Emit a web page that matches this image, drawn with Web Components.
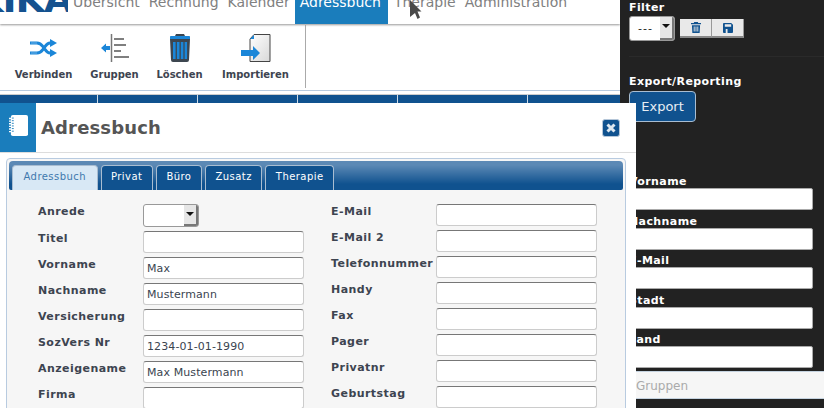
<!DOCTYPE html>
<html lang="de"><head><meta charset="utf-8"><title>Adressbuch</title>
<style>
html,body{margin:0;padding:0;height:408px;overflow:hidden;background:#222}
body{font-family:"DejaVu Sans",sans-serif}
</style></head><body>
<app-shell>
  <top-nav slot="main">
    <span class="logo" slot="logo">KIKA</span>
    <nav-link>Übersicht</nav-link><nav-link>Rechnung</nav-link><nav-link>Kalender</nav-link><nav-link active>Adressbuch</nav-link><nav-link>Therapie</nav-link><nav-link>Administration</nav-link>
  </top-nav>
  <tool-bar slot="main">
    <tool-button style="width:57px" label="Verbinden"><svg width="28" height="28" viewBox="0 0 28 28" fill="none"><g stroke="#1b86d8" stroke-width="3"><path d="M0 9h7c4 0 5 2.500 7 5s3 5 6 5h2M0 19h7c4 0 5-2.500 7-5s3-5 6-5h2"/></g><g stroke="#8cc6f0" stroke-width=".7"><path d="M1 9h6M1 19h6"/></g><path fill="#1b86d8" d="M20 5l7 4-7 4zM20 15l7 4-7 4z"/></svg></tool-button>
    <tool-button style="width:47px" label="Gruppen"><svg width="28" height="28" viewBox="0 0 28 28" fill="none"><path d="M10.500 0v28" stroke="#777" stroke-width="1.500"/><path d="M13 5h10M13 11h12M13 17h7M13 23h15" stroke="#555" stroke-width="1.500"/><path fill="#1b86d8" d="M0 14l5-4.500v2.500h4v4H5v2.500z"/></svg></tool-button>
    <tool-button style="width:45px" label="Löschen"><svg width="20" height="28" viewBox="0 0 20 28"><path fill="#3b4550" d="M6 0h8l1 2h3q2 0 2 2v1H0V4q0-2 2-2h3z"/><path fill="#1b86d8" d="M0 2.500q0-.5 2-.5h16q2 0 2 .5V5H0z"/><path fill="#3d4650" d="M0 5h20l-1 21q0 2-2 2H3q-2 0-2-2z"/><path fill="#1b86d8" d="M3 8h2.600v17H3zM6.900 8h2.600v17H6.900zM10.800 8h2.600v17h-2.600zM14.600 8h2.500v17h-2.500z"/></svg></tool-button>
    <tool-button style="width:69px" label="Importieren"><svg width="30" height="28" viewBox="0 0 30 28"><defs><linearGradient id="pg" x1="0" y1="0" x2="1" y2="1"><stop offset="0" stop-color="#fff"/><stop offset="1" stop-color="#d8d8d8"/></linearGradient></defs><path fill="url(#pg)" stroke="#444" stroke-width="1" d="M13 .5h16v27H9V5z"/><path fill="#1b86d8" d="M9 5l4-4v4z"/><path fill="#1b86d8" d="M0 16h12v-4l7 7-7 7v-4H0z"/></svg></tool-button>
  </tool-bar>
  <grid-head slot="main"></grid-head>
  <side-panel slot="side">
    <side-label>Filter</side-label>
    <filter-row><drop-select value="---" wide></drop-select><icon-button><svg width="10" height="11" viewBox="0 0 11 12" fill="#10528f"><path d="M3.500 0h4l.5 1h3v1.500H0V1h3zM1 3.500h9L9.500 12h-8zM3 5v5.500h1V5zm2 0v5.500h1V5zm2 0v5.500h1V5z" fill-rule="evenodd"/></svg></icon-button><icon-button><svg width="10" height="10" viewBox="0 0 11 11" fill="#10528f"><path fill-rule="evenodd" d="M1 0h8l2 2v8a1 1 0 0 1-1 1H1a1 1 0 0 1-1-1V1a1 1 0 0 1 1-1zm1 1.500V4h7V1.500zM3 6.500V11h2V6.500z"/></svg></icon-button></filter-row>
    <side-rule></side-rule>
    <side-label>Export/Reporting</side-label>
    <export-button>Export</export-button>
    <side-input label="Vorname" first></side-input>
    <side-input label="Nachname"></side-input>
    <side-input label="E-Mail"></side-input>
    <side-input label="Stadt"></side-input>
    <side-input label="Land"></side-input>
    <side-section>Gruppen</side-section>
  </side-panel>
  <dialog-window slot="overlay" heading="Adressbuch">
    <tab-panel>
      <form-grid>
        <div slot="left">
          <form-row label="Anrede" kind="select"></form-row>
          <form-row label="Titel"></form-row>
          <form-row label="Vorname">Max</form-row>
          <form-row label="Nachname">Mustermann</form-row>
          <form-row label="Versicherung"></form-row>
          <form-row label="SozVers Nr">1234-01-01-1990</form-row>
          <form-row label="Anzeigename">Max Mustermann</form-row>
          <form-row label="Firma"></form-row>
        </div>
        <div slot="right">
          <form-row label="E-Mail"></form-row>
          <form-row label="E-Mail 2"></form-row>
          <form-row label="Telefonnummer"></form-row>
          <form-row label="Handy"></form-row>
          <form-row label="Fax"></form-row>
          <form-row label="Pager"></form-row>
          <form-row label="Privatnr"></form-row>
          <form-row label="Geburtstag"></form-row>
        </div>
      </form-grid>
    </tab-panel>
  </dialog-window>
  <svg slot="overlay" class="cursor" width="13" height="20" viewBox="0 0 13 20" style="position:absolute;left:410px;top:0;z-index:5"><path fill="#4a4a4a" d="M0 0l11.500 11.500H7.500l2.500 6-2.500 1.500-2.500-6-5 4z"/></svg>
</app-shell>
<script>
const def=(name,html,init)=>customElements.define(name,class extends HTMLElement{
  constructor(){super();this.attachShadow({mode:"open"}).innerHTML=html;}
  connectedCallback(){if(init)init(this,this.shadowRoot);}
});
def("app-shell",`<style>:host{display:grid;grid-template-columns:620px 204px;width:824px;height:408px;overflow:hidden;position:relative;background:#222}
.m{background:#fff;height:408px;overflow:hidden}.s{height:408px;overflow:hidden}</style>
<div class="m"><slot name="main"></slot></div><div class="s"><slot name="side"></slot></div><slot name="overlay"></slot>`);
def("top-nav",`<style>:host{display:flex;align-items:flex-end;height:24px;overflow:hidden;background:#fff;box-shadow:0 1px 2px #999;position:relative;z-index:1}
.l{width:68px;height:24px;flex:none;overflow:hidden;position:relative}
::slotted(.logo){position:absolute;left:-26px;top:-21px;font:bold 38px "DejaVu Sans",sans-serif;color:#14528f;letter-spacing:-1px;line-height:40px}
</style><div class="l"><slot name="logo"></slot></div><slot></slot>`);
def("nav-link",`<style>:host{display:block;color:#808080;font-size:14px;line-height:17px;padding:0 5px 13px;margin-right:-1px;white-space:nowrap}
:host([active]){background:#1a7dbc;color:#fff;margin:0 1px 0 1px;padding:0 7px 13px 5px}
</style><slot></slot>`);
def("tool-bar",`<style>:host{display:flex;gap:19px;height:54px;padding:9px 0 0 15px;width:290px;border-right:1px solid #aaa;box-sizing:content-box;margin-top:1px}</style><slot></slot>`);
def("tool-button",`<style>:host{display:flex;flex-direction:column;align-items:center;gap:6px;font-weight:bold;font-size:10px;color:#3d4450;white-space:nowrap}
.i{height:28px;display:flex;align-items:flex-start}span{line-height:13px}</style><div class="i"><slot></slot></div><span></span>`,(e,r)=>{r.querySelector("span").textContent=e.getAttribute("label")});
def("grid-head",`<style>:host{display:flex;margin-top:2px;border-top:1px solid #b8cbe0;padding-top:3px;background:#fff}
i{display:block;height:9px;border-top:1px solid #ccc;background:#10528f;border-right:1px solid #cfdbe6;box-sizing:border-box}
</style><i style="width:98px"></i><i style="width:100px"></i><i style="width:100px"></i><i style="width:100px"></i><i style="width:130px"></i><i style="flex:1;border-right:0"></i>`);
def("side-panel",`<style>:host{display:block;padding:0 0 0 9px;color:#fff}</style><slot></slot>`);
def("side-label",`<style>:host{display:block;font-weight:bold;font-size:11px;line-height:13px;letter-spacing:.4px;padding-top:1px;color:#fff}</style><slot></slot>`);
def("filter-row",`<style>:host{display:flex;align-items:center;margin-top:2px;height:25px}
::slotted(drop-select){margin-right:5px}</style><slot></slot>`);
def("drop-select",`<style>:host{display:block;width:56px;height:23px;box-sizing:border-box;border:1px solid #999;border-radius:3px;background:#fff;position:relative;font-size:11px;color:#333;line-height:21px;padding-left:8px}
:host([wide]){width:46px;height:25px;line-height:23px;color:#222;letter-spacing:1px}
b{position:absolute;right:0;top:0;bottom:0;width:14px;background:#e6e6e6;border-right:2px solid #777;border-bottom:2px solid #777;box-sizing:border-box;border-radius:0 2px 2px 0}
b:after{content:"";position:absolute;left:2px;top:7px;border:4px solid transparent;border-top:4px solid #111;border-bottom:0}
</style><span></span><b></b>`,(e,r)=>{r.querySelector("span").textContent=e.getAttribute("value")||""});
def("icon-button",`<style>:host{display:flex;align-items:center;justify-content:center;width:32px;height:19px;box-sizing:border-box;background:#e9e9e9;border-right:1px solid #999;border-bottom:2px solid #888;margin-top:0}</style><slot></slot>`);
def("side-rule",`<style>:host{display:block;height:1px;background:#2a2a2a;margin:15px 0 17px}</style>`);
def("export-button",`<style>:host{display:flex;align-items:center;justify-content:center;box-sizing:border-box;width:67px;height:31px;margin:3px 0 0;background:#10528f;color:#e8eef4;font-size:13px;border:1px solid #a9bdd1;border-radius:4px}</style><slot></slot>`);
def("side-input",`<style>:host{display:block;font-weight:bold;font-size:11px;letter-spacing:.4px;color:#fff;line-height:13px;margin-top:4.500px}
:host([first]){margin-top:53px}
div{height:22px;width:184px;background:#fff;border:1px solid #aaa;border-radius:2px;box-sizing:border-box}
</style><span></span><div></div>`,(e,r)=>{r.querySelector("span").textContent=e.getAttribute("label")});
def("side-section",`<style>:host{display:block;margin:3px 0 0;box-sizing:border-box;height:28px;padding-left:7px;background:#f6f6f6;border-top:1px solid #c5d3e0;border-bottom:1px solid #c5d3e0;color:#aaa;font-size:12px;line-height:28px}</style><slot></slot>`);
def("dialog-window",`<style>:host{display:block;position:absolute;left:0;top:103px;width:636px;height:305px;background:#fff;overflow:hidden;color:#444}
header{display:flex;align-items:center;height:49px;border-bottom:1px solid #ddd;padding-right:16px}
.ic{width:36px;height:49px;background:#1a7dbc;display:flex;align-items:flex-start;justify-content:center;padding-top:12px;box-sizing:border-box}
h1{margin:0 0 0 5px;flex:1;font-size:18px;letter-spacing:.15px;line-height:48px;font-weight:bold;color:#555}
.x{width:18px;height:18px;border-radius:3px;background:#10528f;border:1px solid #b5c6d8;box-sizing:border-box;display:flex;align-items:center;justify-content:center;margin-top:0}
main{padding:5px 10px 0 6px}
</style><header><div class="ic"><svg width="19" height="21" viewBox="0 0 20 24" preserveAspectRatio="none"><path fill="#fff" d="M4 0h14q2 0 2 2v20q0 2-2 2H4q-2 0-2-2V2q0-2 2-2z"/><path stroke="#fff" stroke-width="1.500" d="M0 4h4M0 7h4M0 10h4M0 13h4M0 16h4M0 19h4"/><path stroke="#1a7dbc" d="M3 3.500h2M3 6.500h2M3 9.500h2M3 12.500h2M3 15.500h2M3 18.500h2"/></svg></div><h1></h1><div class="x"><svg width="10" height="10" viewBox="0 0 10 10"><path stroke="#dfe8f0" stroke-width="3" d="M1.500 1.500l7 7M8.500 1.500l-7 7"/></svg></div></header><main><slot></slot></main>`,(e,r)=>{r.querySelector("h1").textContent=e.getAttribute("heading")});
def("tab-panel",`<style>:host{display:block;border:1px solid #b8cbe0;border-radius:4px;padding:2px;background:#f6f6f6;height:300px}
nav{display:flex;gap:3px;height:29px;box-sizing:border-box;padding:4px 0 0 3px;border-radius:4px 4px 2px 2px;background:linear-gradient(#5c89b5 0,#5c89b5 4px,#10528f 23px);}
a{display:block;font-size:10px;letter-spacing:.45px;color:#fff;padding:0 9.500px;line-height:22px;border:1px solid #a9bdd1;border-bottom:0;border-radius:4px 4px 0 0;background:#10528f}
a.on{background:#d8e8f5;color:#3f78ad;padding:0 10.500px}
section{padding:14px 0 0 29px}
</style><nav><a class="on">Adressbuch</a><a>Privat</a><a>Büro</a><a>Zusatz</a><a>Therapie</a></nav><section><slot></slot></section>`);
def("form-grid",`<style>:host{display:flex;gap:27px}::slotted(div){display:flex;flex-direction:column;gap:4px}::slotted([slot=right]){margin-top:0}</style><slot name="left"></slot><slot name="right"></slot>`);
def("form-row",`<style>:host{display:flex;height:22px;font-size:11px;color:#3a4450}
:host([kind=select]){height:23px}
label{width:105px;flex:none;font-weight:bold;font-size:11px;letter-spacing:.45px;color:#3d4450;line-height:14px;white-space:nowrap;padding-top:1px}
.f{width:161px;height:22px;box-sizing:border-box;background:#fff;border:1px solid #ccc;border-top-color:#777;border-radius:3px;padding:2px 3px 0;line-height:18px;letter-spacing:.1px}
</style><label></label><div class="f"><slot></slot></div>`,(e,r)=>{r.querySelector("label").textContent=e.getAttribute("label");
 if(e.getAttribute("kind")==="select"){const d=document.createElement("drop-select");r.querySelector(".f").replaceWith(d);}});
</script>
</body></html>
